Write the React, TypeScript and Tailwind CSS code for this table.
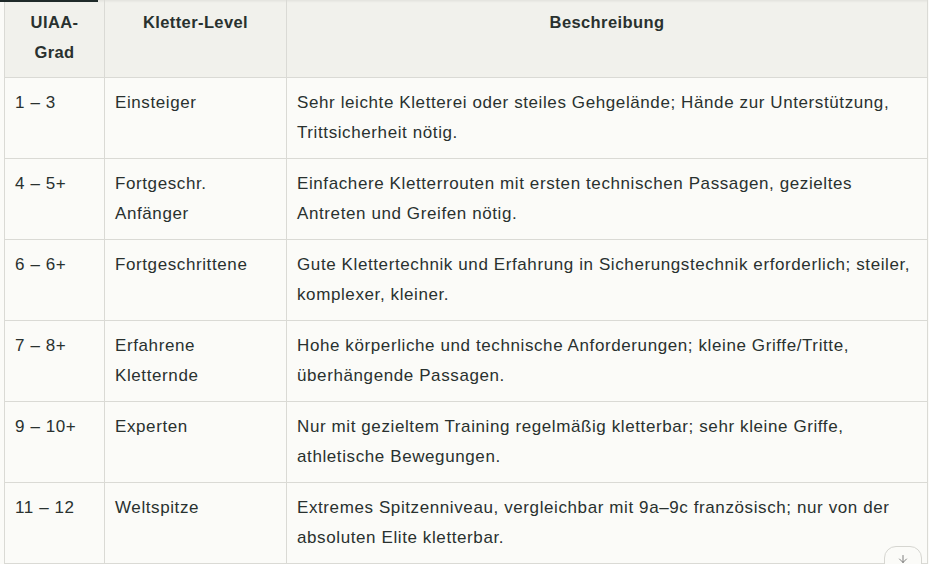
import React from 'react';
import { ArrowDown } from 'lucide-react';

const rows: { grade: string; level: string[]; desc: string[] }[] = [
  {
    grade: '1 – 3',
    level: ['Einsteiger'],
    desc: ['Sehr leichte Kletterei oder steiles Gehgelände; Hände zur Unterstützung,', 'Trittsicherheit nötig.'],
  },
  {
    grade: '4 – 5+',
    level: ['Fortgeschr.', 'Anfänger'],
    desc: ['Einfachere Kletterrouten mit ersten technischen Passagen, gezieltes', 'Antreten und Greifen nötig.'],
  },
  {
    grade: '6 – 6+',
    level: ['Fortgeschrittene'],
    desc: ['Gute Klettertechnik und Erfahrung in Sicherungstechnik erforderlich; steiler,', 'komplexer, kleiner.'],
  },
  {
    grade: '7 – 8+',
    level: ['Erfahrene', 'Kletternde'],
    desc: ['Hohe körperliche und technische Anforderungen; kleine Griffe/Tritte,', 'überhängende Passagen.'],
  },
  {
    grade: '9 – 10+',
    level: ['Experten'],
    desc: ['Nur mit gezieltem Training regelmäßig kletterbar; sehr kleine Griffe,', 'athletische Bewegungen.'],
  },
  {
    grade: '11 – 12',
    level: ['Weltspitze'],
    desc: ['Extremes Spitzenniveau, vergleichbar mit 9a–9c französisch; nur von der', 'absoluten Elite kletterbar.'],
  },
];

const lines = (items: string[]) =>
  items.map((t, i) => (
    <React.Fragment key={i}>
      {i > 0 && <br />}
      {t}
    </React.Fragment>
  ));

export default function App() {
  return (
    <div
      className="relative w-[929px] h-[564px] overflow-hidden bg-[#fbfbf8] text-[#29312f]"
      style={{ fontFamily: '"Liberation Sans", Arial, sans-serif' }}
    >
      {/* active tab marker */}
      <div className="absolute left-0 top-0 h-[2px] w-[98px] bg-[#1f2a2a] z-10" />

      <div className="pl-[4px] pr-[2px]">
        <table className="table-fixed border-collapse w-[924px] text-[17px] leading-[30px] tracking-[0.6px]">
          <colgroup>
            <col className="w-[100px]" />
            <col className="w-[182px]" />
            <col />
          </colgroup>
          <thead className="text-[16.5px] tracking-[0.4px]">
            <tr className="bg-[#f1f1ec] shadow-[inset_0_3px_3px_-2px_rgba(0,0,0,0.08)]">
              <th className="border-x border-b border-[#dadad5] px-[10px] pt-[7px] pb-[10px] align-top font-semibold text-center">
                UIAA-
                <br />
                Grad
              </th>
              <th className="border-x border-b border-[#dadad5] px-[10px] pt-[7px] pb-[10px] align-top font-semibold text-center">
                Kletter-Level
              </th>
              <th className="border-x border-b border-[#dadad5] px-[10px] pt-[7px] pb-[10px] align-top font-semibold text-center">
                Beschreibung
              </th>
            </tr>
          </thead>
          <tbody>
            {rows.map((r) => (
              <tr key={r.grade}>
                <td className="border border-[#dadad5] px-[10px] py-[10px] align-top whitespace-nowrap">{r.grade}</td>
                <td className="border border-[#dadad5] px-[10px] py-[10px] align-top whitespace-nowrap">{lines(r.level)}</td>
                <td className="border border-[#dadad5] px-[10px] py-[10px] align-top whitespace-nowrap">{lines(r.desc)}</td>
              </tr>
            ))}
          </tbody>
        </table>
      </div>

      {/* scroll-down button */}
      <button className="absolute left-[884px] top-[546px] w-[38px] h-[38px] rounded-xl border border-[#d6d6d1] bg-[#fbfbf8] flex items-start justify-center pt-[6px] text-[#555]">
        <ArrowDown className="w-[12px] h-[12px]" strokeWidth={1.5} />
      </button>
    </div>
  );
}
